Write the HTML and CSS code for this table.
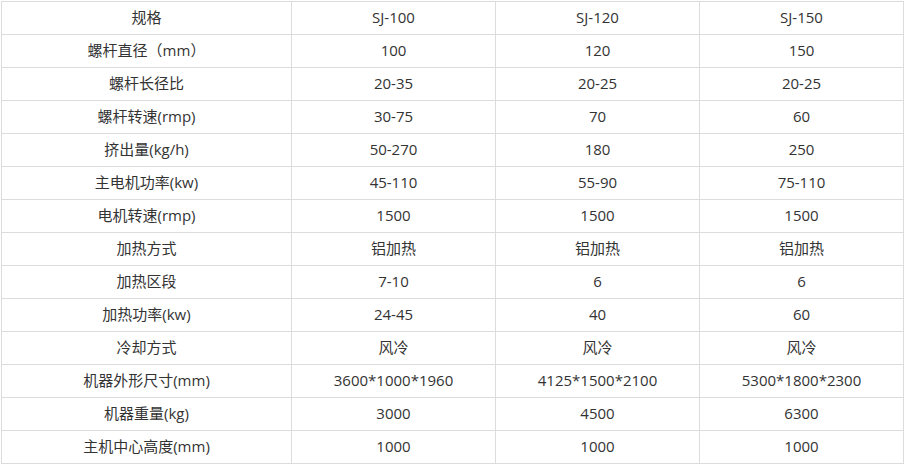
FILE: index.html
```html
<!DOCTYPE html>
<html lang="zh">
<head>
<meta charset="utf-8">
<link rel="stylesheet" href="styles.css">
</head>
<body>
<div class="spec">
  <div class="cell">规格</div><div class="cell">SJ-100</div><div class="cell">SJ-120</div><div class="cell">SJ-150</div>
  <div class="cell">螺杆直径（mm）</div><div class="cell">100</div><div class="cell">120</div><div class="cell">150</div>
  <div class="cell">螺杆长径比</div><div class="cell">20-35</div><div class="cell">20-25</div><div class="cell">20-25</div>
  <div class="cell">螺杆转速(rmp)</div><div class="cell">30-75</div><div class="cell">70</div><div class="cell">60</div>
  <div class="cell">挤出量(kg/h)</div><div class="cell">50-270</div><div class="cell">180</div><div class="cell">250</div>
  <div class="cell">主电机功率(kw)</div><div class="cell">45-110</div><div class="cell">55-90</div><div class="cell">75-110</div>
  <div class="cell">电机转速(rmp)</div><div class="cell">1500</div><div class="cell">1500</div><div class="cell">1500</div>
  <div class="cell">加热方式</div><div class="cell">铝加热</div><div class="cell">铝加热</div><div class="cell">铝加热</div>
  <div class="cell">加热区段</div><div class="cell">7-10</div><div class="cell">6</div><div class="cell">6</div>
  <div class="cell">加热功率(kw)</div><div class="cell">24-45</div><div class="cell">40</div><div class="cell">60</div>
  <div class="cell">冷却方式</div><div class="cell">风冷</div><div class="cell">风冷</div><div class="cell">风冷</div>
  <div class="cell">机器外形尺寸(mm)</div><div class="cell">3600*1000*1960</div><div class="cell">4125*1500*2100</div><div class="cell">5300*1800*2300</div>
  <div class="cell">机器重量(kg)</div><div class="cell">3000</div><div class="cell">4500</div><div class="cell">6300</div>
  <div class="cell">主机中心高度(mm)</div><div class="cell">1000</div><div class="cell">1000</div><div class="cell">1000</div>
</div>
</body>
</html>
```
FILE: styles.css
```css
html, body {
  margin: 0;
  padding: 0;
  background: #fff;
}
body {
  padding: 1px 0 0 1px;
  font-family: "Open Sans", "Noto Sans CJK SC", sans-serif;
  font-size: 15px;
  color: #333;
}
.spec {
  display: grid;
  grid-template-columns: 289px 203px 203px 203px;
  grid-auto-rows: 32px;
  gap: 1px;
  padding: 1px;
  background: #dcdcdc;
  width: max-content;
}
.cell {
  background: #fff;
  display: flex;
  align-items: center;
  justify-content: center;
  white-space: nowrap;
  line-height: 1;
  padding-bottom: 1px;
}
```
